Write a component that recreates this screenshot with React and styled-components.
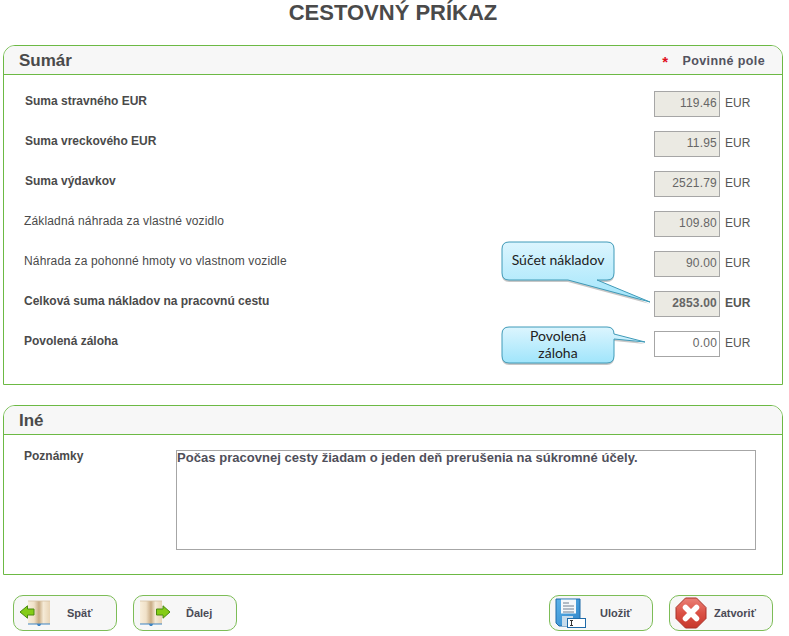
import React from "react";
import styled, { createGlobalStyle } from "styled-components";

const Global = createGlobalStyle`
  html, body { margin: 0; padding: 0; background: #fff; }
  body { font-family: "Liberation Sans", Arial, sans-serif; color: #4a4a4a; }
`;
const Page = styled.div`
  position: relative;
  width: 789px;
  height: 636px;
  padding: 0 6px 0 3px;
  box-sizing: border-box;
  overflow: hidden;
`;
const Title = styled.h1`
  margin: 0;
  height: 45px;
  padding-top: 1px;
  box-sizing: border-box;
  font-size: 22px;
  line-height: 24px;
  font-weight: bold;
  text-align: center;
  color: #4a4a4a;
`;
const Panel = styled.section`
  height: ${(p) => p.$h}px;
  margin-bottom: 20px;
  box-sizing: border-box;
  border: 1px solid #6cb944;
  border-radius: 12px 12px 0 0;
  overflow: hidden;
`;
const PanelHead = styled.header`
  display: flex;
  align-items: center;
  justify-content: space-between;
  height: 26px;
  padding: 2px 17px 0 15px;
  background: #f7f7f7;
  border-bottom: 1px solid #6cb944;
`;
const PanelTitle = styled.h2`
  margin: 0;
  font-size: 17px;
  font-weight: bold;
  color: #4a4a4a;
`;
const Required = styled.div`
  display: flex;
  align-items: center;
  gap: 14px;
  font-size: 12.5px;
  font-weight: bold;
  letter-spacing: 0.4px;
  color: #53535f;
`;
const Star = styled.span`
  color: #e0101e;
  font-size: 15px;
`;
const Rows = styled.div`
  display: flex;
  flex-direction: column;
  gap: 14px;
  padding: 16px 0 0 20px;
`;
const Row = styled.div`
  display: flex;
  align-items: center;
  height: 26px;
  padding-left: ${(p) => p.$indent || 0}px;
`;
const Label = styled.span`
  flex: 1;
  margin-top: -7px;
  font-size: 12px;
  letter-spacing: ${(p) => (p.$bold ? "0" : "0.15px")};
  font-weight: ${(p) => (p.$bold ? "bold" : "normal")};
  color: #4a4a4a;
`;
const Amount = styled.div`
  width: 66px;
  height: 26px;
  box-sizing: border-box;
  padding: 0 2px 0 0;
  border: 1px solid #a6a6a6;
  background: ${(p) => (p.$free ? "#fff" : "#ebeae3")};
  font-size: 12px;
  line-height: 22px;
  letter-spacing: 0.2px;
  font-weight: ${(p) => (p.$bold ? "bold" : "normal")};
  text-align: right;
  color: #666;
`;
const Unit = styled.span`
  width: 62px;
  padding-left: 5px;
  box-sizing: border-box;
  margin-top: -3px;
  font-size: 12px;
  font-weight: ${(p) => (p.$bold ? "bold" : "normal")};
  color: #555;
`;
const NoteRow = styled.div`
  display: flex;
  padding: 15px 26px 0 20px;
`;
const NoteLabel = styled.span`
  width: 152px;
  font-size: 12px;
  font-weight: bold;
  line-height: 12px;
`;
const Note = styled.div`
  flex: 1;
  height: 100px;
  box-sizing: border-box;
  border: 1px solid #a6a6a6;
  font-size: 13px;
  letter-spacing: 0.04px;
  line-height: 14px;
  font-weight: bold;
  color: #4f4f5a;
`;
const Footer = styled.div`
  display: flex;
  gap: 16px;
  padding-left: 10px;
`;
const Spacer = styled.div`
  width: 280px;
`;
const Button = styled.button`
  display: flex;
  flex: none;
  align-items: center;
  width: 104px;
  height: 36px;
  padding: 0 0 0 5px;
  box-sizing: border-box;
  border: 1px solid #7dbd57;
  border-radius: 10px;
  background: #f7f7f7;
  font-family: inherit;
  font-size: 11px;
  font-weight: bold;
  color: #4a4a55;
`;
const ButtonText = styled.span`
  margin-left: ${(p) => p.$gap}px;
`;
const CalloutWrap = styled.div`
  position: absolute;
  left: ${(p) => p.$x}px;
  top: ${(p) => p.$y}px;
  width: 112px;
  height: ${(p) => p.$h}px;
`;
const CalloutArt = styled.svg`
  position: absolute;
  left: -6px;
  top: -6px;
  overflow: visible;
`;
const CalloutText = styled.div`
  position: relative;
  display: flex;
  align-items: center;
  justify-content: center;
  height: 100%;
  text-align: center;
  font-family: Lato, "Open Sans", sans-serif;
  font-size: 14px;
  line-height: 17px;
  color: #222;
  padding-bottom: ${(p) => p.$pb || 0}px;
  box-sizing: border-box;
`;

function BookArt({ arrow }) {
  const left = arrow === "left";
  const id = `pg${arrow}`;
  const x = left ? 9 : 1;
  const m = x + 11;
  return (
    <svg width="32" height="28" viewBox="0 0 32 28">
      <defs>
        <linearGradient id={id} x1="0" x2="1" y1="0" y2="0">
          <stop offset="0" stopColor="#f8eedb" />
          <stop offset="0.55" stopColor="#f0e1c8" />
          <stop offset="1" stopColor="#c8ab84" />
        </linearGradient>
        <linearGradient id={`${id}b`} x1="0" x2="1" y1="0" y2="0">
          <stop offset="0" stopColor="#c8ab84" />
          <stop offset="0.4" stopColor="#f5ead6" />
          <stop offset="1" stopColor="#e8d4b6" />
        </linearGradient>
      </defs>
      <path d={`M${x} 24h22v1.5H${m + 2}L${m + 1} 27h-2l-1-1.5H${x}z`} fill="#3f85c4" />
      <path d={`M${x} 2h${m - x}v22.5H${x}z`} fill={`url(#${id})`} />
      <path d={`M${m} 2h11v22.5H${m}z`} fill={`url(#${id}b)`} />
      <path d={`M${x} 2h22`} stroke="#d5c2a2" strokeWidth=".8" />
      {left ? (
        <path d="M1 13L8.5 6.8V10H15v6H8.5v3.2z" fill="#84cc16" stroke="#4a8a10" strokeWidth="1" />
      ) : (
        <path d="M31 13L24 6.8V10H17.5v6H24v3.2z" fill="#84cc16" stroke="#4a8a10" strokeWidth="1" />
      )}
    </svg>
  );
}

function SaveArt() {
  return (
    <svg width="32" height="32" viewBox="0 0 32 32">
      <defs>
        <linearGradient id="disk" x1="0" x2="1" y1="0" y2="1">
          <stop offset="0" stopColor="#5cb3ea" />
          <stop offset="1" stopColor="#2f84c8" />
        </linearGradient>
      </defs>
      <path d="M1 2h24v27H4l-3-3z" fill="url(#disk)" stroke="#1e6aa8" />
      <rect x="6" y="2.5" width="15" height="14" fill="#f4f7fa" />
      <path d="M8 6h6M8 9h11M8 12h11M8 15h11" stroke="#6e7f90" strokeWidth="1" />
      <rect x="7" y="19" width="11" height="10" fill="#c7dcec" />
      <rect x="12.5" y="21.5" width="18" height="9" fill="#fff" stroke="#1e6aa8" />
      <path d="M15 23.5h3M15 28.5h3M16.5 23.5v5" stroke="#333" strokeWidth="1" />
    </svg>
  );
}

function CloseArt() {
  return (
    <svg width="32" height="32" viewBox="0 0 32 32">
      <defs>
        <linearGradient id="red" x1="0" x2="0" y1="0" y2="1">
          <stop offset="0" stopColor="#ea8178" />
          <stop offset="0.5" stopColor="#db5145" />
          <stop offset="1" stopColor="#c7372d" />
        </linearGradient>
      </defs>
      <path d="M10.5 1h11L31 10.500v11L21.500 31h-11L1 21.500v-11z" fill="url(#red)" stroke="#a8332b" />
      <path d="M10.500 10.500l11 11M21.500 10.500l-11 11" stroke="#fff" strokeWidth="5.5" strokeLinecap="round" />
    </svg>
  );
}

function Callout({ x, y, h, tail, children, pb }) {
  const id = `c${y}`;
  const w = 112;
  const r = 7;
  const d = `M${r} 0H${w - r}Q${w} 0 ${w} ${r}${tail.right || ""}V${h - r}Q${w} ${h} ${w - r} ${h}${tail.bottom || ""}H${r}Q0 ${h} 0 ${h - r}V${r}Q0 0 ${r} 0Z`;
  return (
    <CalloutWrap $x={x} $y={y} $h={h}>
      <CalloutArt width={w + 12} height={h + 12} viewBox={`-6 -6 ${w + 12} ${h + 12}`}>
        <defs>
          <linearGradient id={id} x1="0" x2="0" y1="0" y2="1">
            <stop offset="0" stopColor="#dcf5fe" />
            <stop offset="1" stopColor="#a0e5fb" />
          </linearGradient>
        </defs>
        <path d={d} fill="#000" opacity=".22" transform="translate(0 2)" />
        <path d={d} fill={`url(#${id})`} stroke="#3f9ab8" strokeWidth="1" />
      </CalloutArt>
      <CalloutText $pb={pb}>{children}</CalloutText>
    </CalloutWrap>
  );
}

const rows = [
  { label: "Suma stravného EUR", value: "119.46", bold: true, indent: 1 },
  { label: "Suma vreckového EUR", value: "11.95", bold: true, indent: 1 },
  { label: "Suma výdavkov", value: "2521.79", bold: true, indent: 1 },
  { label: "Základná náhrada za vlastné vozidlo", value: "109.80" },
  { label: "Náhrada za pohonné hmoty vo vlastnom vozidle", value: "90.00" },
  { label: "Celková suma nákladov na pracovnú cestu", value: "2853.00", bold: true, strong: true },
  { label: "Povolená záloha", value: "0.00", bold: true, free: true },
];

export default function App() {
  return (
    <>
      <Global />
      <Page>
        <Title>CESTOVNÝ PRÍKAZ</Title>
        <Panel $h={340}>
          <PanelHead>
            <PanelTitle>Sumár</PanelTitle>
            <Required>
              <Star>*</Star>
              <span>Povinné pole</span>
            </Required>
          </PanelHead>
          <Rows>
            {rows.map((r) => (
              <Row key={r.label} $indent={r.indent}>
                <Label $bold={r.bold}>{r.label}</Label>
                <Amount $free={r.free} $bold={r.strong}>{r.value}</Amount>
                <Unit $bold={r.strong}>EUR</Unit>
              </Row>
            ))}
          </Rows>
        </Panel>
        <Panel $h={170}>
          <PanelHead>
            <PanelTitle>Iné</PanelTitle>
          </PanelHead>
          <NoteRow>
            <NoteLabel>Poznámky</NoteLabel>
            <Note>Počas pracovnej cesty žiadam o jeden deň prerušenia na súkromné účely.</Note>
          </NoteRow>
        </Panel>
        <Footer>
          <Button>
            <BookArt arrow="left" />
            <ButtonText $gap={16}>Späť</ButtonText>
          </Button>
          <Button>
            <BookArt arrow="right" />
            <ButtonText $gap={15}>Ďalej</ButtonText>
          </Button>
          <Spacer />
          <Button>
            <SaveArt />
            <ButtonText $gap={13}>Uložiť</ButtonText>
          </Button>
          <Button>
            <CloseArt />
            <ButtonText $gap={7}>Zatvoriť</ButtonText>
          </Button>
        </Footer>
        <Callout x={502} y={242} h={38} pb={3} tail={{ bottom: "L95 38L148 60L66 38" }}>Súčet nákladov</Callout>
        <Callout x={502} y={327} h={36} pb={2} tail={{ right: "L143 15L112 12" }}>Povolená<br />záloha</Callout>
      </Page>
    </>
  );
}
